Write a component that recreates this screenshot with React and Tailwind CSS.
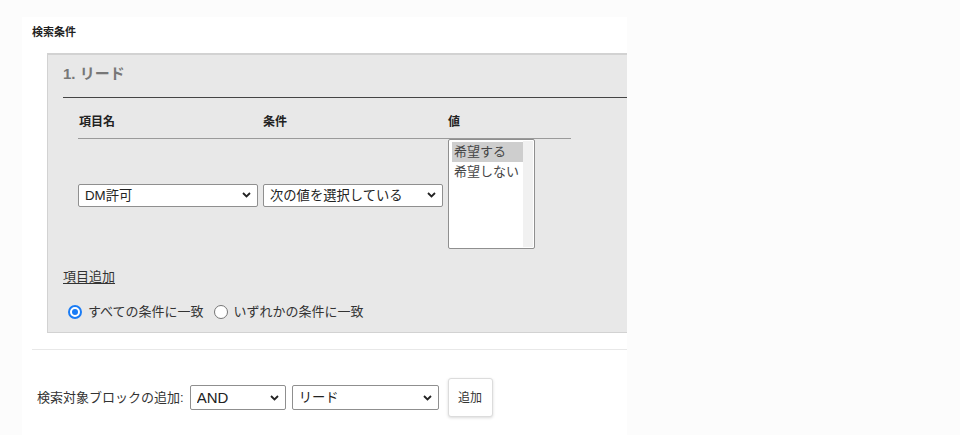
import { useState } from "react";

const font = { fontFamily: '"Liberation Sans", "Noto Sans CJK JP", sans-serif' };

const Chevron = () => (
  <svg
    width="9"
    height="6"
    viewBox="0 0 9 6"
    className="pointer-events-none absolute right-[7px] top-1/2 -translate-y-1/2"
  >
    <path d="M1 1l3.5 3.5L8 1" fill="none" stroke="#222" strokeWidth="1.8" />
  </svg>
);

const Select = ({ value, options, className }) => (
  <div className={`relative ${className}`}>
    <select
      defaultValue={value}
      className="h-full w-full appearance-none rounded-[2px] border border-[#8f8f8f] bg-white pl-[6px] pr-5 text-[13.3px] leading-none text-[#222] outline-none"
    >
      {options.map((o) => (
        <option key={o}>{o}</option>
      ))}
    </select>
    <Chevron />
  </div>
);

const Radio = ({ checked, label, onClick }) => (
  <label onClick={onClick} className="flex cursor-pointer items-center">
    <span
      className={`mr-[6px] flex h-[14px] w-[14px] items-center justify-center rounded-full bg-white ${
        checked ? "border-2 border-[#1a7cf5]" : "border border-[#767676]"
      }`}
    >
      {checked && <span className="h-[6px] w-[6px] rounded-full bg-[#1a7cf5]" />}
    </span>
    <span className="text-[13px] leading-[20px] text-[#333]">{label}</span>
  </label>
);

export default function App() {
  const [match, setMatch] = useState("all");
  const [picked, setPicked] = useState("希望する");

  return (
    <div className="min-h-screen bg-[#fcfcfc] pl-[22px] pt-[17px]" style={font}>
      <div className="h-[418px] w-[605px] overflow-hidden bg-white">
        {/* 見出し */}
        <div className="pl-[10px] pt-[6px] text-[11px] font-bold leading-[18px] text-[#222]">
          検索条件
        </div>

        {/* 条件ブロック */}
        <div className="ml-[25px] mt-[12px] w-[700px] border-b border-l border-t-2 border-[#d2d2d2] bg-[#e8e8e8] pb-[10px] pl-[15px]">
          <div className="border-b border-[#444] pb-[13px] pt-[9px] text-[15px] font-bold leading-[20px] text-[#777]">
            1. リード
          </div>

          <div className="ml-[15px] w-[493px]">
            <div className="grid grid-cols-[185px_185px_123px] border-b border-[#9a9a9a] pb-[6px] pt-[14px] text-[12px] font-bold leading-[20px] text-[#222]">
              <span className="pl-px">項目名</span>
              <span>条件</span>
              <span>値</span>
            </div>

            <div className="grid h-[111px] grid-cols-[185px_185px_123px] items-center">
              <Select value="DM許可" options={["DM許可", "メール許可", "電話許可"]} className="h-[23px] w-[180px]" />
              <Select
                value="次の値を選択している"
                options={["次の値を選択している", "次の値を選択していない"]}
                className="h-[23px] w-[180px]"
              />
              <div className="flex h-[110px] w-[87px] self-start rounded-[2px] border border-[#8f8f8f] bg-white">
                <div className="flex-1 pl-[3px] pt-[2px]">
                  {["希望する", "希望しない"].map((o) => (
                    <div
                      key={o}
                      onClick={() => setPicked(o)}
                      className={`h-[20px] cursor-default pl-[2px] text-[13px] leading-[20px] text-[#444] ${
                        picked === o ? "bg-[#cecece]" : ""
                      }`}
                    >
                      {o}
                    </div>
                  ))}
                </div>
                <div className="my-px mr-px w-[10px] bg-[#f1f1f1]" />
              </div>
            </div>
          </div>

          <a href="#" className="mt-[18px] block w-fit text-[13px] leading-[18px] text-[#333] underline underline-offset-2">
            項目追加
          </a>

          <div className="mt-[16px] flex items-center gap-[10px] pl-[5px]">
            <Radio checked={match === "all"} label="すべての条件に一致" onClick={() => setMatch("all")} />
            <Radio checked={match === "any"} label="いずれかの条件に一致" onClick={() => setMatch("any")} />
          </div>
        </div>

        <div className="ml-[10px] mt-[16px] border-t border-[#e8e8e8]" />

        {/* ブロック追加 */}
        <div className="mt-[28px] flex items-center pl-[15px]">
          <span className="mr-[6px] text-[13px] leading-[20px] text-[#333]">検索対象ブロックの追加:</span>
          <Select value="AND" options={["AND", "OR"]} className="h-[25px] w-[96px] [&_select]:text-[15px]" />
          <Select value="リード" options={["リード", "取引先", "商談"]} className="ml-[6px] h-[25px] w-[147px]" />
          <button className="ml-[9px] h-[39px] w-[45px] rounded-[3px] border border-[#dcdcdc] bg-white text-[12px] text-[#333] shadow-[0_1px_3px_rgba(0,0,0,0.15)]">
            追加
          </button>
        </div>
      </div>
    </div>
  );
}
